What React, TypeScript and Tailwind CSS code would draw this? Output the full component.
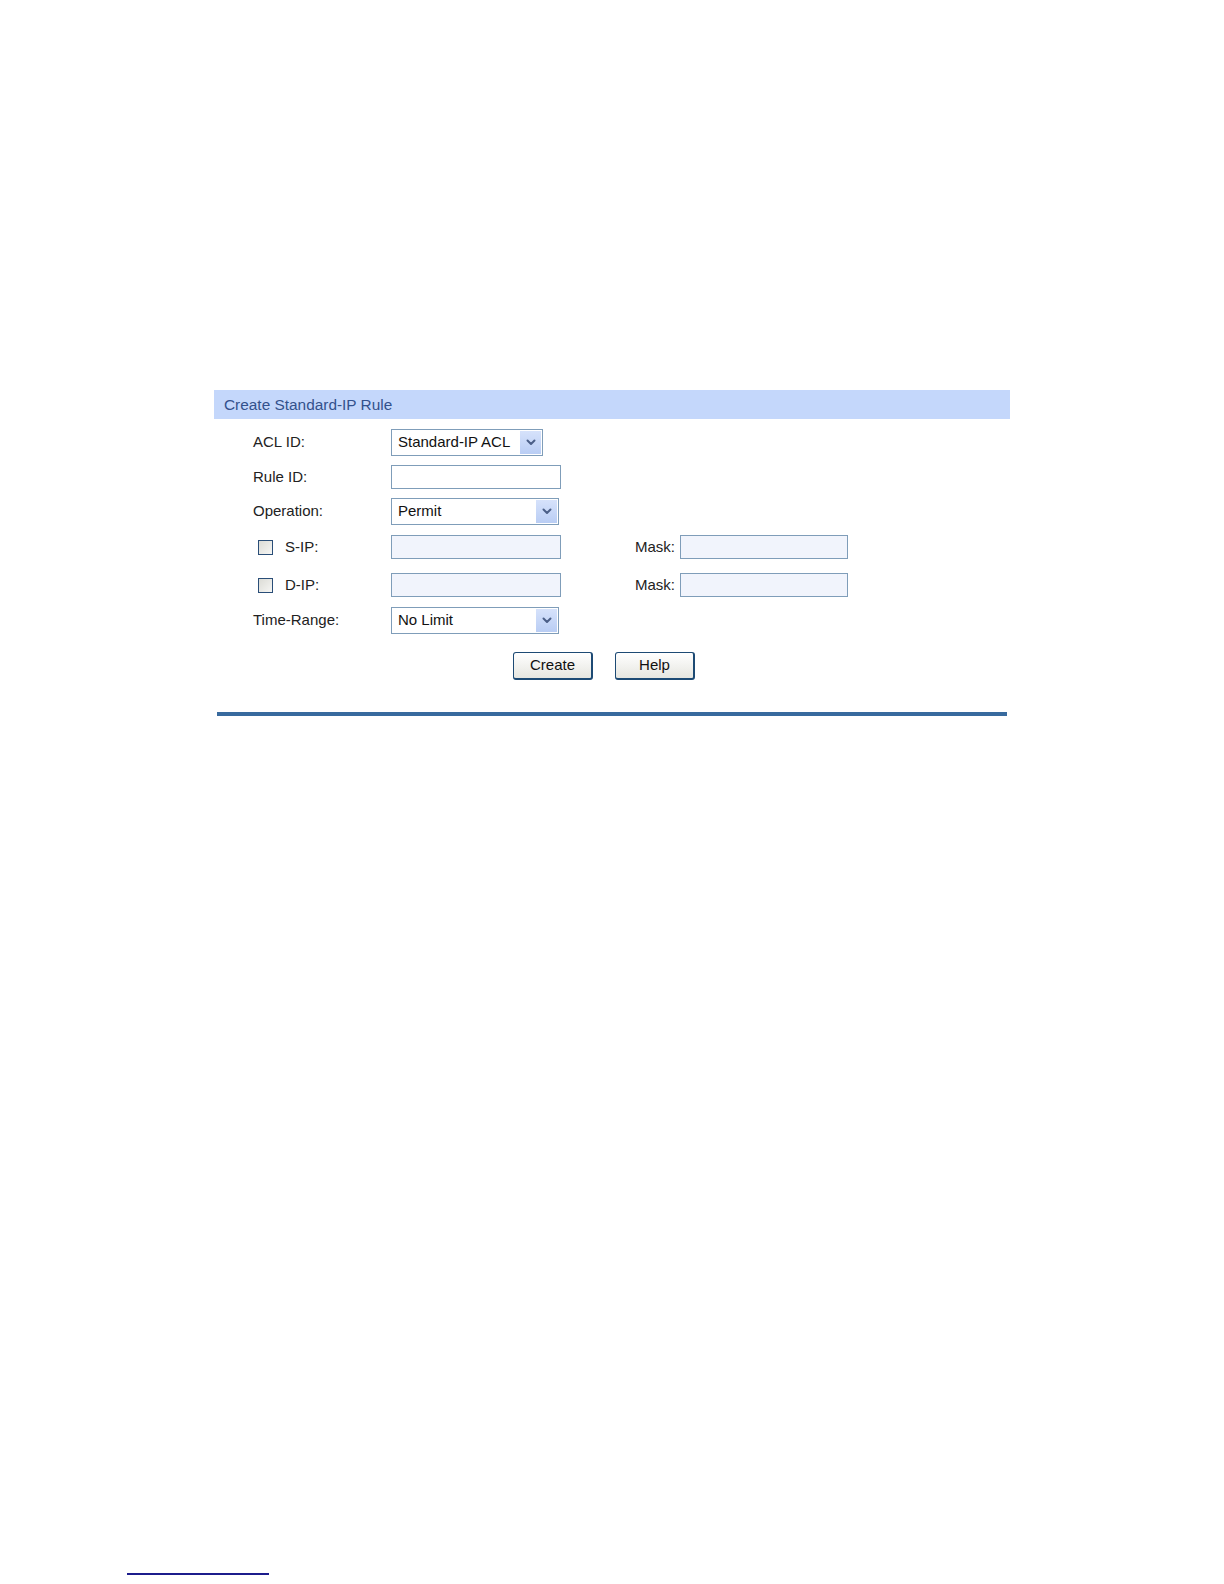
import type { ReactNode } from "react";

function Chevron() {
  return (
    <svg width="10" height="7" viewBox="0 0 10 7" aria-hidden="true">
      <polyline points="1.5,1.5 5,5 8.5,1.5" fill="none" stroke="#4b5f88" strokeWidth="2" strokeLinecap="round" strokeLinejoin="round" />
    </svg>
  );
}

function Select({ value, width }: { value: string; width: string }) {
  return (
    <div className={`flex h-[27px] ${width} items-stretch border border-[#7f9db9] bg-white`}>
      <span className="flex flex-1 items-center pl-[6px] text-[15px] text-[#111]">{value}</span>
      <span className="m-px flex w-[21px] items-center justify-center bg-gradient-to-b from-[#d6e2fb] to-[#b9cdf4]">
        <Chevron />
      </span>
    </div>
  );
}

function TextBox({ disabled }: { disabled?: boolean }) {
  return (
    <div
      className={`h-[24px] w-[170px] border border-[#7f9db9] ${disabled ? "bg-[#f1f4fc]" : "bg-white"}`}
    />
  );
}

function Checkbox() {
  return <span className="block h-[15px] w-[15px] border border-[#2a4e78] bg-gradient-to-br from-[#dcdcd6] to-[#f6f6f4]" />;
}

function Row({ label, height, top, children }: { label: ReactNode; height: string; top: string; children: ReactNode }) {
  return (
    <div className={`flex ${height} ${top} items-center`}>
      <div className="flex w-[177px] items-center text-[15px] text-[#222]">{label}</div>
      {children}
    </div>
  );
}

function Mask() {
  return (
    <>
      <span className="ml-[74px] text-[15px] text-[#222]">Mask:</span>
      <div className="ml-[5px] h-[24px] w-[168px] border border-[#7f9db9] bg-[#f1f4fc]" />
    </>
  );
}

function Button({ children }: { children: ReactNode }) {
  return (
    <button className="h-[28px] w-[80px] rounded-[3px] border border-[#1d4a74] border-r-2 border-b-2 bg-gradient-to-b from-white to-[#e6e6e0] text-[15px] text-[#111]">
      {children}
    </button>
  );
}

export default function App() {
  return (
    <div className="min-h-[1584px] bg-white font-['Liberation_Sans',Arial,sans-serif]">
      <div className="pl-[214px] pt-[390px]">
        <div className="w-[796px]">
          <div className="flex h-[29px] items-center bg-[#c4d7fb] pl-[10px] text-[15.4px] text-[#33518c]">
            Create Standard-IP Rule
          </div>

          <Row label={<span className="pl-[39px]">ACL ID:</span>} height="h-[27px]" top="mt-[10px]">
            <Select value="Standard-IP ACL" width="w-[152px]" />
          </Row>
          <Row label={<span className="pl-[39px]">Rule ID:</span>} height="h-[24px]" top="mt-[9px]">
            <TextBox />
          </Row>
          <Row label={<span className="pl-[39px]">Operation:</span>} height="h-[27px]" top="mt-[9px]">
            <Select value="Permit" width="w-[168px]" />
          </Row>
          <Row
            label={
              <span className="flex items-center pl-[44px]">
                <Checkbox />
                <span className="ml-[12px]">S-IP:</span>
              </span>
            }
            height="h-[24px]"
            top="mt-[10px]"
          >
            <TextBox disabled />
            <Mask />
          </Row>
          <Row
            label={
              <span className="flex items-center pl-[44px]">
                <Checkbox />
                <span className="ml-[12px]">D-IP:</span>
              </span>
            }
            height="h-[24px]"
            top="mt-[14px]"
          >
            <TextBox disabled />
            <Mask />
          </Row>
          <Row label={<span className="pl-[39px]">Time-Range:</span>} height="h-[25px]" top="mt-[11px]">
            <Select value="No Limit" width="w-[168px]" />
          </Row>

          <div className="mt-[19px] flex gap-[22px] pl-[299px]">
            <Button>Create</Button>
            <Button>Help</Button>
          </div>

          <div className="mx-[3px] mt-[32px] h-[4px] bg-[#386a9e]" />
        </div>
      </div>

      <div className="ml-[127px] mt-[857px] h-[2px] w-[142px] bg-[#1c1c8c]" />
    </div>
  );
}
